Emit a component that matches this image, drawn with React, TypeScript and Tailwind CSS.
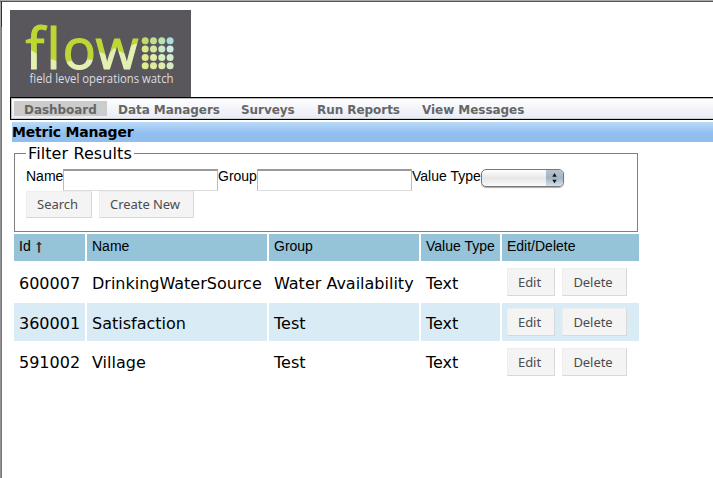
import type { ReactNode } from "react";

const DOT_COLORS = [
  ["#bfd96b", "#bfdf8c", "#bce2b0", "#a9dcdc"],
  ["#dbe88a", "#cfe7a4", "#cbe9c4", "#cfebe3"],
  ["#dfe98f", "#dfeda8", "#d8edc0", "#d3ecd2"],
  ["#dfe98f", "#e2ec98", "#dcecae", "#d6ebbf"],
];

const MENU = [
  { label: "Dashboard", width: "w-[93px]", active: true },
  { label: "Data Managers", width: "w-[123px]" },
  { label: "Surveys", width: "w-[76px]" },
  { label: "Run Reports", width: "w-[105px]" },
  { label: "View Messages", width: "w-[122px]" },
];

const ROWS = [
  { id: "600007", name: "DrinkingWaterSource", group: "Water Availability", type: "Text", line: "leading-[42px]" },
  { id: "360001", name: "Satisfaction", group: "Test", type: "Text", line: "leading-[42px]" },
  { id: "591002", name: "Village", group: "Test", type: "Text", line: "leading-[40px]" },
];

const COLS = "grid grid-cols-[71px_180px_150px_79px_137px] gap-x-[2px]";

function Logo() {
  return (
    <svg width="181" height="87" viewBox="10 10 181 87" className="block bg-[#5a575c]">
      <defs>
        <pattern id="wave" patternUnits="userSpaceOnUse" x="0" y="0" width="200" height="100">
          <rect width="200" height="100" fill="#bdd735" />
          <path
            d="M10 42 L31 50 L37 54 L48 58 L54 60 Q60 64 66 62 Q80 58 94 60 L96 51 L108 55 L114 48 L125 54 L130 46 L140 42 V80 H10Z"
            fill="#e4efb2"
          />
        </pattern>
      </defs>
      <g fontSize="56" fill="url(#wave)" stroke="url(#wave)" strokeWidth="1.2" className="font-['Open_Sans',sans-serif]">
        <text x="25.5" y="68.5">f</text>
        <text x="46.5" y="68.5">l</text>
        <text x="62.5" y="68.5" textLength="33.5" lengthAdjust="spacingAndGlyphs">o</text>
        <text x="95.5" y="68.5" textLength="43" lengthAdjust="spacingAndGlyphs">w</text>
      </g>
      {DOT_COLORS.map((row, r) =>
        row.map((color, c) => (
          <circle key={`${r}-${c}`} cx={145.2 + c * 8.3} cy={40.8 + r * 8.3} r="3.5" fill={color} />
        )),
      )}
      <text x="29.5" y="83" fontSize="12" textLength="144" lengthAdjust="spacingAndGlyphs" fill="#dcdce0" className="font-['Open_Sans',sans-serif]">
        field level operations watch
      </text>
    </svg>
  );
}

function Button({ children, className }: { children: ReactNode; className: string }) {
  return (
    <button
      type="button"
      className={`border border-t-[#eee] border-r-[#d8d8d8] border-b-[#d8d8d8] border-l-[#eee] bg-[#f4f4f4] pr-[3px] text-center font-['Noto_Sans','Open_Sans',sans-serif] text-[13px] leading-[25px] tracking-[-0.05px] whitespace-nowrap text-[#4c4c4c] ${className}`}
    >
      {children}
    </button>
  );
}

function TypeSelect() {
  return (
    <div className="flex h-[18px] w-[83px] overflow-hidden rounded-[5px] border border-[#777] bg-linear-to-b from-white via-[#e6e6e6] to-[#fbfbfb] shadow-[0_1px_1px_#aaa]">
      <div className="ml-auto w-[17px] bg-linear-to-b from-[#b9c5d1] via-[#a3b3c2] to-[#d3e1ec]">
        <svg width="17" height="16" viewBox="0 0 17 16" className="block">
          <path d="M8.5 3 L10.7 6.7 H6.3Z M8.5 13.2 L10.7 9.7 H6.3Z" fill="#111" />
        </svg>
      </div>
    </div>
  );
}

function HeadCell({ children }: { children: ReactNode }) {
  return <div className="flex h-[27px] bg-[#95c3d8] pl-[5px] leading-[25px]">{children}</div>;
}

export default function App() {
  return (
    <div className="flex h-[478px] w-[713px] flex-col overflow-hidden bg-white text-black">
      <div className="h-px shrink-0 bg-[#a8a8a8]" />
      <div className="h-px shrink-0 bg-[#555]" />
      <div className="flex min-h-0 flex-1">
        <div className="flex w-[2px] shrink-0 flex-col">
          <div className="h-[25px] border-r border-[#1f3150] bg-[#a8a8a8]" />
          <div className="flex-1 border-r border-[#777] bg-[#919191]" />
        </div>
        <main className="min-w-0 flex-1 pt-2 pl-2">
          <Logo />
          <nav className="flex h-[23px] w-[720px] border border-black bg-linear-to-b from-white to-[#e8ebf5] pt-[3px] pl-[3px] font-['DejaVu_Sans',Verdana,sans-serif] text-[12px] leading-[18px] font-bold tracking-[-0.05px] text-[#666] shadow-[inset_0_1px_0_#bbb,inset_1px_0_0_#bbb,inset_0_-1px_0_#c8ccd0]">
            {MENU.map((m) => (
              <a key={m.label} className={`h-[15px] whitespace-nowrap ${m.width} ${m.active ? "bg-[#ccc] pl-[10px]" : "pl-[11px]"}`}>
                {m.label}
              </a>
            ))}
          </nav>
          <h1 className="mt-[2px] ml-[2px] h-[20px] bg-linear-to-b from-[#bad9f8] to-[#8fbeef] to-60% font-['DejaVu_Sans',Verdana,sans-serif] text-[14px] leading-[20px] font-bold tracking-[-0.2px]">
            Metric Manager
          </h1>

          <fieldset className="mt-[2px] ml-1 h-[88px] w-[624px] border border-[#808080] pl-[11px]">
            <legend className="h-[18px] w-[108px] px-[2px] font-['DejaVu_Sans',Verdana,sans-serif] text-[16px] leading-[20px] tracking-[0.1px] whitespace-nowrap">
              Filter Results
            </legend>
            <div className="mt-[7px] flex h-[22px] items-start font-['Liberation_Sans',Arial,sans-serif] text-[14px] leading-[15px]">
              <label className="w-[37px]">Name</label>
              <input className="h-[22px] w-[155px] border border-t-2 border-[#bbb] border-t-[#999] border-b-[#ddd]" />
              <label className="w-[39px]">Group</label>
              <input className="h-[22px] w-[155px] border border-t-2 border-[#bbb] border-t-[#999] border-b-[#ddd]" />
              <label className="w-[69px] whitespace-nowrap">Value Type</label>
              <TypeSelect />
            </div>
            <div className="flex gap-[7px]">
              <Button className="h-[27px] w-[66px]">Search</Button>
              <Button className="h-[27px] w-[95px]">Create New</Button>
            </div>
          </fieldset>

          <section className="mt-[2px] ml-1 w-[625px]">
            <div className={`${COLS} font-['Liberation_Sans',Arial,sans-serif] text-[14px]`}>
              <HeadCell>
                Id
                <svg width="10" height="14" viewBox="0 0 10 14" className="mt-[6px] ml-[3px]">
                  <path d="M5 1 L8.5 5 H6.3 V13 H3.7 V5 H1.5Z" fill="#333" stroke="#d9c9c4" strokeWidth="0.6" />
                </svg>
              </HeadCell>
              <HeadCell>Name</HeadCell>
              <HeadCell>Group</HeadCell>
              <HeadCell>Value Type</HeadCell>
              <HeadCell>Edit/Delete</HeadCell>
            </div>
            {ROWS.map((row, i) => {
              const cell = `h-[38px] pl-[5px] whitespace-nowrap ${row.line} ${i % 2 ? "bg-[#d9ebf5]" : "bg-white"}`;
              return (
                <div key={row.id} className={`${COLS} mt-[2px] font-['DejaVu_Sans',Verdana,sans-serif] text-[16px]`}>
                  <div className={cell}>{row.id}</div>
                  <div className={cell}>{row.name}</div>
                  <div className={cell}>{row.group}</div>
                  <div className={cell}>{row.type}</div>
                  <div className={`${cell} flex gap-[7px] pt-[5px]`}>
                    <Button className="h-[28px] w-[48px]">Edit</Button>
                    <Button className="h-[28px] w-[65px]">Delete</Button>
                  </div>
                </div>
              );
            })}
          </section>
        </main>
      </div>
    </div>
  );
}
